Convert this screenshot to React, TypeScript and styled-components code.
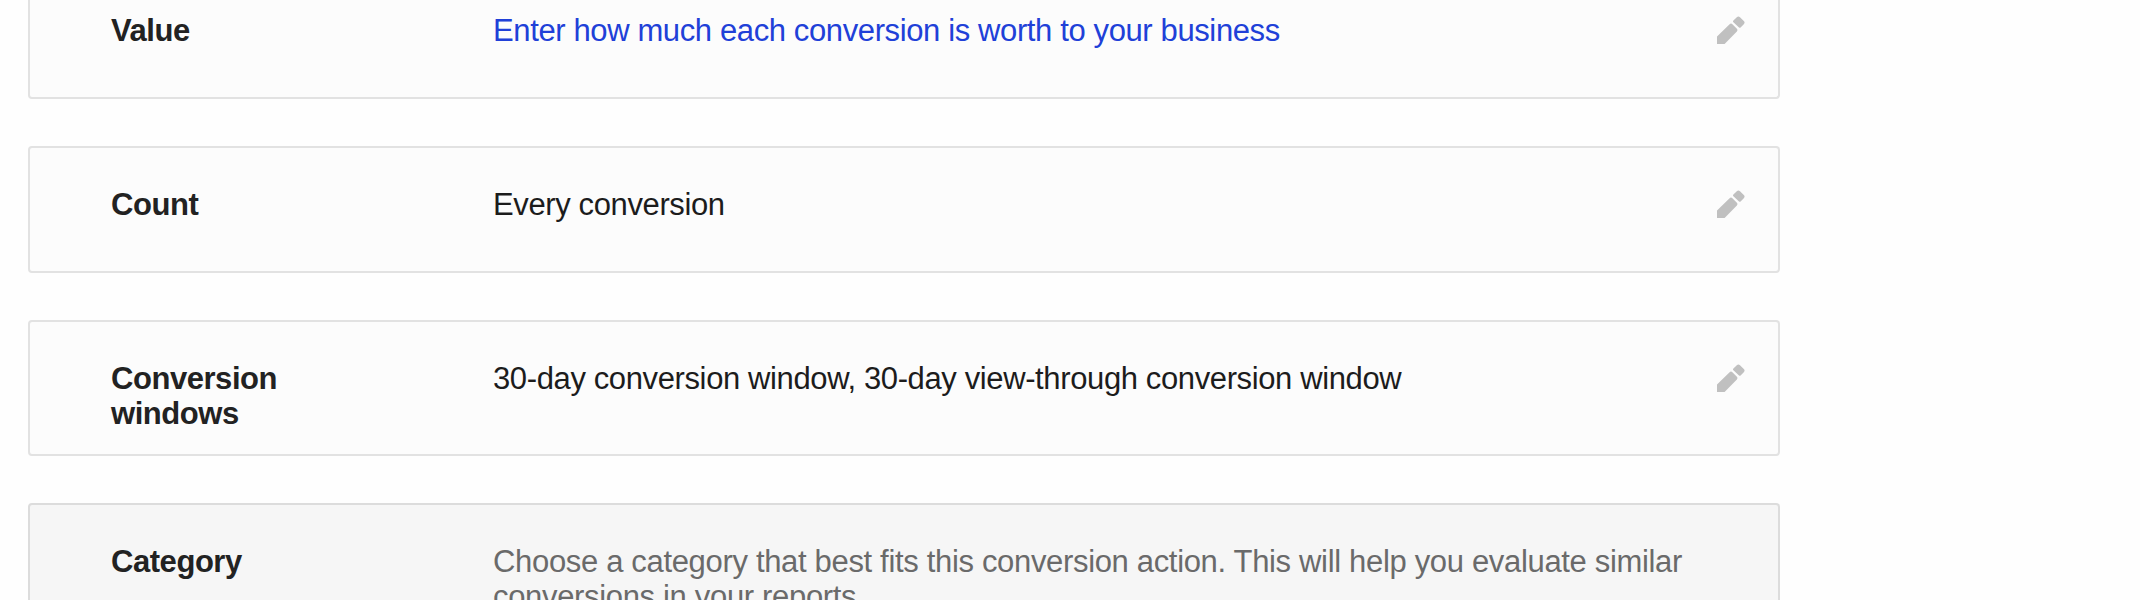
import React from "react";
import styled, { createGlobalStyle } from "styled-components";

const GlobalStyle = createGlobalStyle`
  body {
    margin: 0;
    background: #fefefe;
    font-family: "Liberation Sans", Arial, sans-serif;
  }
`;

const Page = styled.main`
  box-sizing: border-box;
  height: 600px;
  padding-left: 28px;
  overflow: hidden;
  display: flex;
  flex-direction: column;
  gap: 47px;
`;

const Card = styled.section<{ $height: number; $top: number; $muted?: boolean; $open?: boolean }>`
  box-sizing: border-box;
  flex: none;
  width: 1752px;
  height: ${(p) => p.$height}px;
  padding: ${(p) => p.$top}px 33px 0 81px;
  display: flex;
  align-items: flex-start;
  background: ${(p) => (p.$muted ? "#f6f6f6" : "#fcfcfc")};
  border: 2px solid ${(p) => (p.$muted ? "#dcdcdc" : "#e2e2e2")};
  border-top-width: ${(p) => (p.$open ? 0 : 2)}px;
  border-radius: ${(p) => (p.$open ? "0 0 4px 4px" : "4px")};
`;

const Label = styled.h2`
  flex: none;
  width: 382px;
  margin: 0;
  font-size: 31px;
  font-weight: 700;
  line-height: 35px;
  letter-spacing: -0.45px;
  color: #222;
`;

const Value = styled.div<{ $tone?: "link" | "hint" }>`
  flex: 1;
  font-size: 31px;
  line-height: 35px;
  letter-spacing: ${(p) => (p.$tone === "hint" ? -0.33 : -0.38)}px;
  white-space: nowrap;
  color: ${(p) => (p.$tone === "link" ? "#2040d8" : p.$tone === "hint" ? "#6a6a6a" : "#1c1c1c")};
`;

const EditIcon = styled.svg`
  flex: none;
  width: 28px;
  height: 28px;
  margin-top: 3px;
  fill: #c0c0c0;
`;

const Pencil = () => (
  <EditIcon viewBox="0 0 28 28" aria-label="Edit">
    <path d="M0 20.6 12.6 8.2Q14 6.9 15.4 8.2L19.9 12.7Q21.2 14 19.9 15.4L7.6 28H0Z" />
    <path d="M16.4 6.2Q15.6 5.4 16.4 4.6L19.8 1.2Q21.4-.4 23 1.2L26.8 5Q28.4 6.6 26.8 8.2L23.6 11.4Q22.8 12.2 22 11.4Z" />
  </EditIcon>
);

export default function App() {
  return (
    <>
      <GlobalStyle />
      <Page>
        <Card $height={99} $top={13} $open>
          <Label>Value</Label>
          <Value $tone="link">Enter how much each conversion is worth to your business</Value>
          <Pencil />
        </Card>
        <Card $height={127} $top={39}>
          <Label>Count</Label>
          <Value>Every conversion</Value>
          <Pencil />
        </Card>
        <Card $height={136} $top={39}>
          <Label>
            Conversion
            <br />
            windows
          </Label>
          <Value>30-day conversion window, 30-day view-through conversion window</Value>
          <Pencil />
        </Card>
        <Card $height={160} $top={39} $muted>
          <Label>Category</Label>
          <Value $tone="hint">
            Choose a category that best fits this conversion action. This will help you evaluate similar
            <br />
            conversions in your reports.
          </Value>
        </Card>
      </Page>
    </>
  );
}
